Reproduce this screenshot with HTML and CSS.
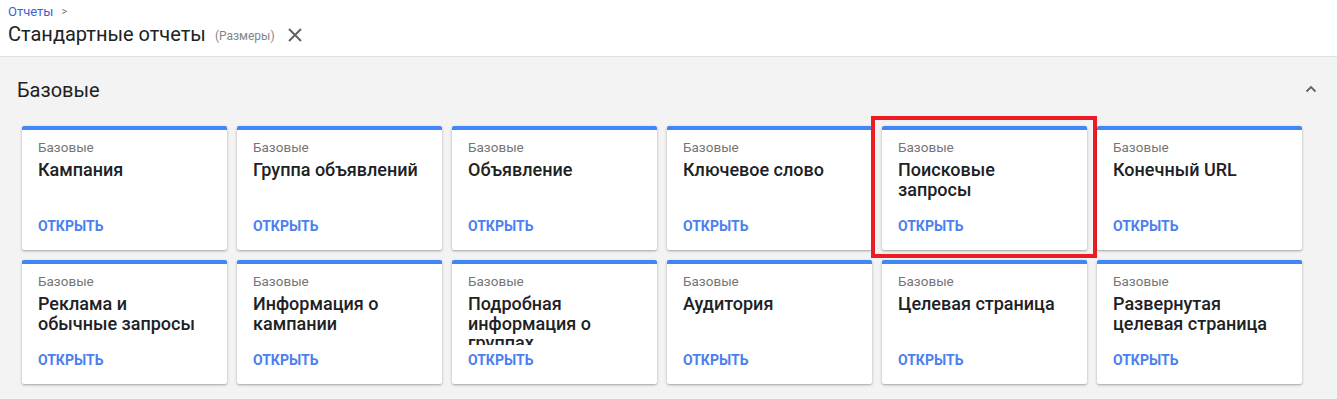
FILE: index.html
```html
<!DOCTYPE html>
<html lang="ru">
<head>
<meta charset="utf-8">
<link rel="stylesheet" href="styles.css">
</head>
<body>
<header class="header">
  <div class="crumbs"><a class="crumb">Отчеты</a><span class="crumb-sep">&gt;</span></div>
  <div class="title-row">
    <h1 class="title">Стандартные отчеты</h1>
    <span class="subtitle">(Размеры)</span>
    <svg class="close" width="14" height="14" viewBox="0 0 14 14"><path d="M1 1L13 13M13 1L1 13" stroke="#5f6368" stroke-width="2" fill="none"/></svg>
  </div>
</header>
<main class="main">
  <div class="section-head">
    <h2 class="section-title">Базовые</h2>
    <svg class="chevron" width="12" height="8" viewBox="0 0 12 8"><path d="M1.5 6.5L6 2L10.5 6.5" stroke="#5f6368" stroke-width="1.8" fill="none"/></svg>
  </div>
  <div class="grid">
    <div class="card"><div class="label">Базовые</div><div class="name">Кампания</div><a class="open">ОТКРЫТЬ</a></div>
    <div class="card"><div class="label">Базовые</div><div class="name">Группа объявлений</div><a class="open">ОТКРЫТЬ</a></div>
    <div class="card"><div class="label">Базовые</div><div class="name">Объявление</div><a class="open">ОТКРЫТЬ</a></div>
    <div class="card"><div class="label">Базовые</div><div class="name">Ключевое слово</div><a class="open">ОТКРЫТЬ</a></div>
    <div class="card highlighted"><div class="label">Базовые</div><div class="name">Поисковые запросы</div><a class="open">ОТКРЫТЬ</a></div>
    <div class="card"><div class="label">Базовые</div><div class="name">Конечный URL</div><a class="open">ОТКРЫТЬ</a></div>
    <div class="card"><div class="label">Базовые</div><div class="name">Реклама и обычные запросы</div><a class="open">ОТКРЫТЬ</a></div>
    <div class="card"><div class="label">Базовые</div><div class="name">Информация о кампании</div><a class="open">ОТКРЫТЬ</a></div>
    <div class="card"><div class="label">Базовые</div><div class="name">Подробная информация о группах</div><a class="open">ОТКРЫТЬ</a></div>
    <div class="card"><div class="label">Базовые</div><div class="name">Аудитория</div><a class="open">ОТКРЫТЬ</a></div>
    <div class="card"><div class="label">Базовые</div><div class="name">Целевая страница</div><a class="open">ОТКРЫТЬ</a></div>
    <div class="card"><div class="label">Базовые</div><div class="name">Развернутая целевая страница</div><a class="open">ОТКРЫТЬ</a></div>
  </div>
</main>
</body>
</html>
```
FILE: styles.css
```css
*, *::before, *::after { box-sizing: border-box; }
html, body { margin: 0; padding: 0; }
body {
  font-family: Roboto, "Noto Sans", Arial, sans-serif;
  background: #f3f3f3;
  color: #202124;
  height: 399px;
  overflow: hidden;
}
.header {
  background: #fff;
  height: 57px;
  border-bottom: 1px solid #e0e0e0;
  padding: 4px 8px 0;
}
.crumbs {
  font-size: 13px;
  line-height: 16px;
  display: flex;
  gap: 8px;
}
.crumb { color: #3f61d0; }
.crumb-sep { color: #757575; font-size: 11px; }
.title-row {
  display: flex;
  align-items: center;
  margin-top: 2px;
  height: 24px;
}
.title {
  font-size: 20px;
  font-weight: 400;
  margin: 0;
  line-height: 24px;
  color: #202124;
}
.subtitle {
  font-size: 12px;
  color: #80868b;
  margin-left: 9px;
  margin-top: 4px;
}
.close { margin-left: 13px; margin-top: 1px; }
.main { padding: 0 35px 0 17px; }
.section-head {
  display: flex;
  align-items: center;
  justify-content: space-between;
  height: 64px;
  padding-top: 1px;
}
.section-title {
  font-size: 20px;
  font-weight: 400;
  margin: 0;
  color: #202124;
}
.chevron { margin-right: -15px; margin-top: -1px; }
.grid {
  margin-top: 5px;
  padding-left: 5px;
  display: grid;
  grid-template-columns: repeat(6, 205px);
  column-gap: 10px;
  row-gap: 10px;
}
.card {
  position: relative;
  height: 124px;
  background: #fff;
  border-top: 4px solid #4285f4;
  border-radius: 2px;
  box-shadow: 0 1px 3px rgba(0,0,0,0.28), 0 1px 1px rgba(0,0,0,0.08);
  padding: 9px 20px 0 16px;
  display: flex;
  flex-direction: column;
}
.label {
  font-size: 13.5px;
  line-height: 16px;
  color: #757575;
}
.name {
  margin-top: 5px;
  font-size: 18px;
  font-weight: 500;
  line-height: 19.5px;
  height: 51px;
  overflow: hidden;
  color: #202124;
}
.open {
  margin-top: 7px;
  font-size: 14px;
  font-weight: 700;
  line-height: 16px;
  color: #4a80f0;
}
.highlighted::after {
  content: "";
  position: absolute;
  left: -11px;
  top: -14px;
  width: 226px;
  height: 142px;
  border: 4px solid #ed1c24;
  pointer-events: none;
}
```
